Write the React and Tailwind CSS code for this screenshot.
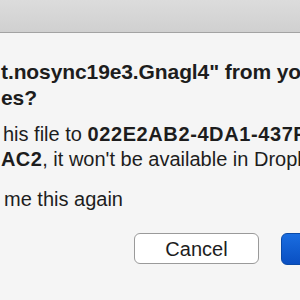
import React from 'react';

export default function App() {
  return (
    <div className="w-[300px] h-[300px] overflow-hidden bg-[#f5f5f5] text-[#1d1d1d]" style={{ fontFamily: '"Liberation Sans", Arial, sans-serif' }}>
      {/* title bar */}
      <div className="h-[33px] bg-gradient-to-b from-[#dcdcdc] to-[#d0d0d0] border-b border-[#a3a3a3]" />

      <div className="pl-[1px] pt-[27px] whitespace-nowrap">
        <div className="text-[21px] font-bold leading-[24px] tracking-[-0.1px]">
          <div>t.nosync19e3.Gnagl4" from your</div>
          <div className="pt-[2px]">es?</div>
        </div>

        <div className="mt-[12px] text-[20px] leading-[25px] pl-[2px]">
          <div>
            his file to <b className="tracking-[0.6px]">022E2AB2-4DA1-437F</b>
          </div>
          <div className="-ml-[2px]">
            <b className="tracking-[0.4px]">AC2</b>, it won't be available in Dropbox
          </div>
        </div>

        <div className="mt-[15px] pl-[3px] text-[20px] leading-[24px]">me this again</div>

        <div className="mt-[22px] flex gap-[22px] pl-[133px]">
          <button className="w-[125px] h-[31px] shrink-0 rounded-[6px] bg-white border border-[#9a9a9a] text-[20px] text-[#1d1d1d] leading-none">
            Cancel
          </button>
          <button className="w-[125px] h-[32px] shrink-0 rounded-[6px] bg-gradient-to-b from-[#1a6de0] to-[#0a4fc2] border border-[#0a4aa8]" />
        </div>
      </div>
    </div>
  );
}
